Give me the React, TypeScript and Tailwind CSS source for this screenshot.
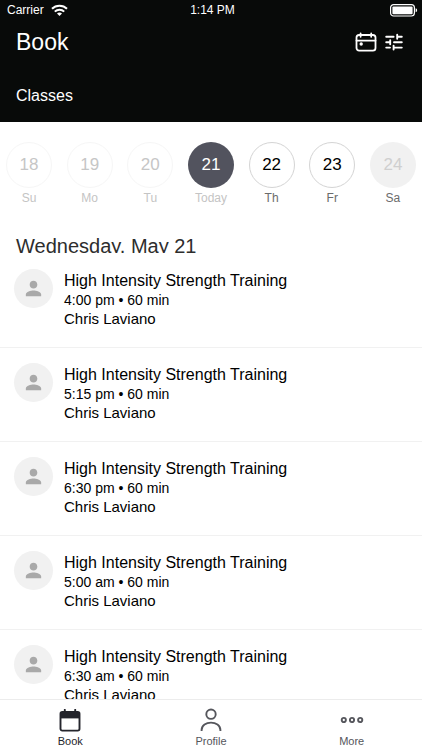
import { MdPerson } from "react-icons/md";

type Day = { date: number; label: string; state: "past" | "today" | "open" | "closed" };

const days: Day[] = [
  { date: 18, label: "Su", state: "past" },
  { date: 19, label: "Mo", state: "past" },
  { date: 20, label: "Tu", state: "past" },
  { date: 21, label: "Today", state: "today" },
  { date: 22, label: "Th", state: "open" },
  { date: 23, label: "Fr", state: "open" },
  { date: 24, label: "Sa", state: "closed" },
];

const circleStyles = {
  past: "border border-[#f6f6f6] text-[#c6c6c6]",
  today: "bg-[#52535e] text-white",
  open: "border border-[#d4d4d4] text-black",
  closed: "bg-[#f1f1f1] text-[#cfcfcf]",
};

const labelStyles = {
  past: "text-[#c4c4c4]",
  today: "text-[#c4c4c4]",
  open: "text-[#6b6b6b]",
  closed: "text-[#6b6b6b]",
};

const classes = [
  { id: 1, name: "High Intensity Strength Training", time: "4:00 pm", duration: "60 min", coach: "Chris Laviano" },
  { id: 2, name: "High Intensity Strength Training", time: "5:15 pm", duration: "60 min", coach: "Chris Laviano" },
  { id: 3, name: "High Intensity Strength Training", time: "6:30 pm", duration: "60 min", coach: "Chris Laviano" },
  { id: 4, name: "High Intensity Strength Training", time: "5:00 am", duration: "60 min", coach: "Chris Laviano" },
  { id: 5, name: "High Intensity Strength Training", time: "6:30 am", duration: "60 min", coach: "Chris Laviano" },
];

function WifiIcon() {
  return (
    <svg width="17" height="13" viewBox="0 0 17 13" fill="none" stroke="currentColor" strokeWidth="2" aria-hidden="true">
      <path d="M1 4.8C5 0.7 12 0.7 16 4.8" />
      <path d="M3.8 7.6C6.4 5 10.6 5 13.2 7.6" />
      <path d="M8.5 12L6 9.4C7.4 8.1 9.6 8.1 11 9.4Z" fill="currentColor" stroke="none" />
    </svg>
  );
}

function BatteryIcon() {
  return (
    <svg width="28" height="13" viewBox="0 0 28 13" aria-hidden="true">
      <rect x="0.6" y="0.6" width="23.8" height="11.4" rx="3" fill="none" stroke="currentColor" strokeWidth="1.2" />
      <rect x="2.4" y="2.4" width="20.2" height="7.8" rx="1" fill="currentColor" />
      <path d="M25.6 4.3C27.6 4.8 27.6 7.8 25.6 8.3Z" fill="currentColor" />
    </svg>
  );
}

function CalendarIcon() {
  return (
    <svg width="22" height="20" viewBox="0 0 22 20" fill="none" stroke="currentColor" strokeWidth="1.8" strokeLinecap="round" aria-hidden="true">
      <rect x="1.5" y="3" width="19" height="15.6" rx="2.6" />
      <path d="M1.5 8.6H20.5M5.6 1.4V4.8M16.2 1.4V4.8" />
      <circle cx="6.2" cy="12" r="1.7" fill="currentColor" stroke="none" />
    </svg>
  );
}

function TuneIcon() {
  return (
    <svg width="18" height="18" viewBox="0 0 18 18" fill="none" stroke="currentColor" strokeWidth="1.9" strokeLinecap="round" aria-hidden="true">
      <path d="M1.2 3.8H8.6M12.2 1.8V5.8M12.2 3.8H16.8" />
      <path d="M1.2 9.2H5.2M5.2 7.2V11.2M9 9.2H16.8" />
      <path d="M1.2 14.6H5M8.6 12.6V16.6M8.6 14.6H16.8" />
    </svg>
  );
}

function BookIcon() {
  return (
    <svg width="22" height="23" viewBox="0 0 22 23" fill="none" stroke="currentColor" strokeWidth="1.9" aria-hidden="true">
      <path d="M5.8 0.8V4M16.2 0.8V4" strokeLinecap="round" />
      <rect x="1.5" y="3" width="19" height="18.6" rx="1.8" />
      <path d="M1.5 3H20.5V9.4H1.5Z" fill="currentColor" stroke="none" />
    </svg>
  );
}

function ProfileIcon() {
  return (
    <svg width="22" height="24" viewBox="0 0 22 24" fill="none" stroke="currentColor" strokeWidth="1.9" aria-hidden="true">
      <circle cx="11" cy="6.2" r="4.7" />
      <path d="M1.6 23V22C1.6 12.2 20.4 12.2 20.4 22V23" />
    </svg>
  );
}

function MoreIcon() {
  return (
    <svg width="24" height="8" viewBox="0 0 24 8" fill="none" stroke="currentColor" strokeWidth="1.9" aria-hidden="true">
      <circle cx="3.8" cy="4" r="2.1" />
      <circle cx="12" cy="4" r="2.1" />
      <circle cx="20.2" cy="4" r="2.1" />
    </svg>
  );
}

const tabs = [
  { name: "Book", Icon: BookIcon, active: true },
  { name: "Profile", Icon: ProfileIcon, active: false },
  { name: "More", Icon: MoreIcon, active: false },
];

export default function App() {
  return (
    <div className="flex h-screen flex-col bg-white font-['Liberation_Sans',Arial,sans-serif] text-black">
      <header className="shrink-0 bg-[#080a09] pb-[15px] text-white">
        <div className="grid grid-cols-3 items-center pl-[7px] pr-1 text-xs leading-5">
          <div className="flex items-center gap-[7px]">
            <span>Carrier</span>
            <WifiIcon />
          </div>
          <span className="text-center">1:14 PM</span>
          <div className="flex justify-end">
            <BatteryIcon />
          </div>
        </div>
        <div className="flex h-11 items-center justify-between px-4">
          <h1 className="text-[23px] leading-7">Book</h1>
          <div className="flex items-center gap-2 pr-[3px]">
            <button type="button" aria-label="Calendar">
              <CalendarIcon />
            </button>
            <button type="button" aria-label="Filters">
              <TuneIcon />
            </button>
          </div>
        </div>
        <h2 className="mt-[21px] px-4 text-base leading-[22px]">Classes</h2>
      </header>

      <main className="min-h-0 flex-1 overflow-y-auto [scrollbar-width:none]">
        <div className="flex justify-between px-1.5 pt-5">
          {days.map((day) => (
            <button key={day.date} type="button" className="flex w-[46px] flex-col items-center gap-px">
              <span className={`flex size-[46px] items-center justify-center rounded-full text-[17px] ${circleStyles[day.state]}`}>
                {day.date}
              </span>
              <span className={`text-xs leading-[18px] ${labelStyles[day.state]}`}>{day.label}</span>
            </button>
          ))}
        </div>

        <h3 className="mt-[27px] h-[19px] overflow-hidden px-4 text-xl leading-6 text-[#2d2d2d]">Wednesday, May 21</h3>

        <ul className="pt-px">
          {classes.map((item) => (
            <li key={item.id} className="border-b border-[#f1f1f1]">
              <a href="#class" className="flex gap-[11px] px-3.5 pt-[15px] pb-[19px]">
                <span className="flex size-[39px] items-center justify-center rounded-full bg-[#f1f1f1] text-[#a9a9a9]">
                  <MdPerson size={23} />
                </span>
                <span className="flex flex-col pt-0.5">
                  <span className="text-base leading-[19px]">{item.name}</span>
                  <span className="text-sm leading-5">
                    {item.time} • {item.duration}
                  </span>
                  <span className="text-[15px] leading-[18px]">{item.coach}</span>
                </span>
              </a>
            </li>
          ))}
        </ul>
      </main>

      <nav className="grid shrink-0 grid-cols-3 border-t border-[#ececec] bg-white">
        {tabs.map(({ name, Icon, active }) => (
          <button
            key={name}
            type="button"
            className={`flex flex-col items-center pt-2 text-[11px] leading-[18px] ${active ? "text-[#24252c]" : "text-[#55565c]"}`}
          >
            <span className="flex h-6 items-center">
              <Icon />
            </span>
            {name}
          </button>
        ))}
      </nav>
    </div>
  );
}
